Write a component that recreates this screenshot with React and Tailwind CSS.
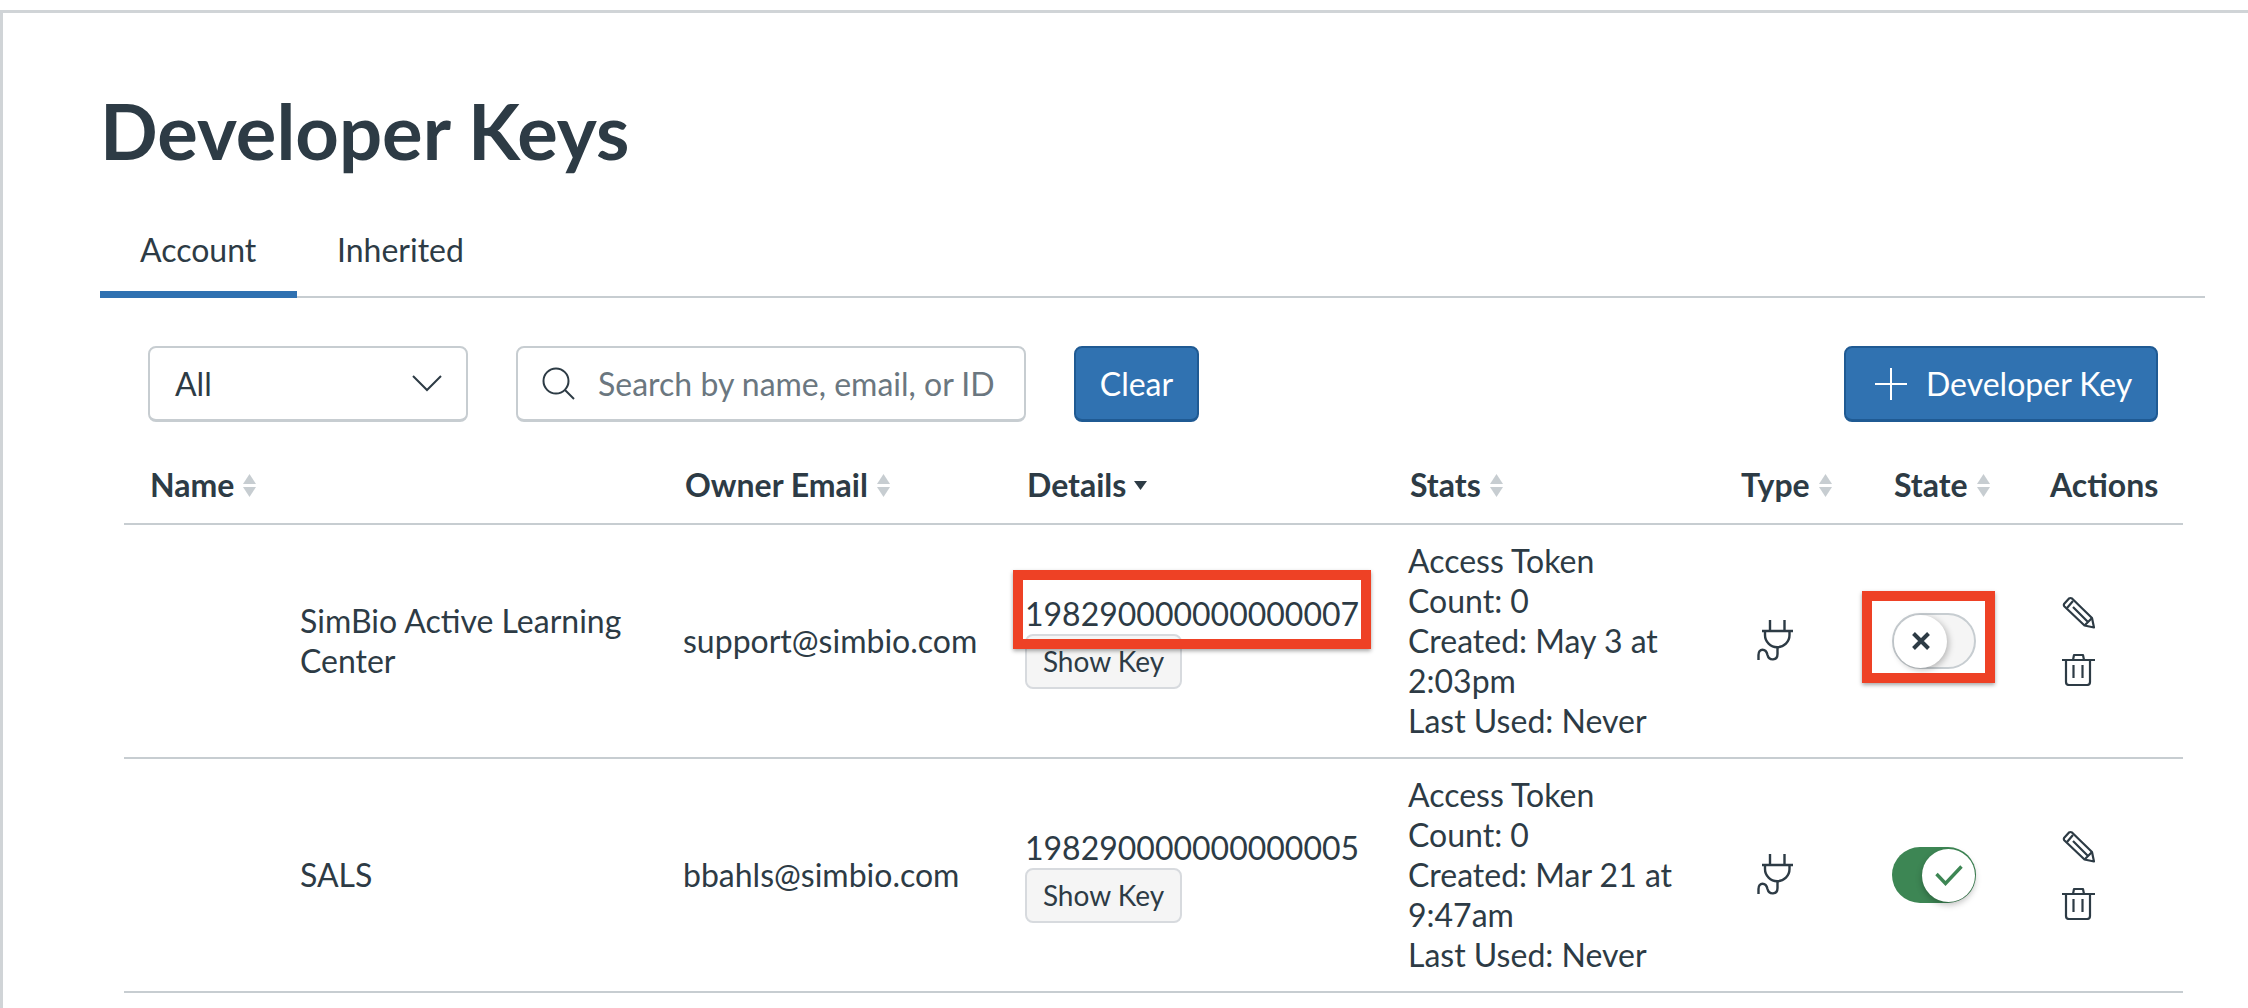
const cols = 'grid grid-cols-[533px_342px_383px_333px_151px_158px_1fr] pl-[26px] border-b-2 border-[#c7cdd1]';

function SortIcon() {
  return (
    <svg className="ml-[9px] w-[13px] h-[23px]" viewBox="0 0 13 23">
      <path d="M6.5 0 L13 10 H0 Z" fill="#c7cdd1" />
      <path d="M0 13 H13 L6.5 23 Z" fill="#c7cdd1" />
    </svg>
  );
}

function Header({ label, sort = true, down = false, first = false }) {
  return (
    <div className={`flex items-center font-bold text-[32px] leading-[40px] ${first ? '' : 'ml-[2px]'}`}>
      {label}
      {sort && <SortIcon />}
      {down && (
        <svg className="ml-[8px] w-[13px] h-[9px]" viewBox="0 0 13 9">
          <path d="M0 0 H13 L6.5 9 Z" fill="#2d3b45" />
        </svg>
      )}
    </div>
  );
}

function PlugIcon() {
  return (
    <svg className="w-[38px] h-[42px] ml-[16px]" viewBox="0 0 38 42" fill="none" stroke="#2d3b45" strokeWidth="2.4">
      <path d="M13 0 V11 M27.5 0 V11 M5 11 H36" />
      <path d="M8 11 V15 A12.2 12.2 0 0 0 32.5 15 V11" />
      <path d="M20.5 27 V34 C20.5 41 12 41 10.5 35 C9 28 1.5 28 1.5 35 V40" />
    </svg>
  );
}

function PencilIcon() {
  return (
    <svg className="w-[33px] h-[33px]" viewBox="0 0 33 33" fill="none" stroke="#2d3b45" strokeWidth="2.2" strokeLinejoin="round">
      <path d="M2 8 L7 2.5 Q8.5 1.5 10 2.5 L30 22 L32 31.5 L22.5 29.5 L2.5 10.5 Q1.5 9.5 2 8 Z" />
      <path d="M5 12 L11 5 M11 11 L26 26 M22.5 29.5 L30 22" />
    </svg>
  );
}

function TrashIcon() {
  return (
    <svg className="w-[33px] h-[33px]" viewBox="0 0 33 33" fill="none" stroke="#2d3b45" strokeWidth="2.2" strokeLinejoin="round">
      <path d="M0 7 H33 M11 7 L12 2 H21 L22 7" />
      <path d="M4 7 V29 Q4 32 7 32 H25 Q28 32 28 29 V7" />
      <path d="M11.5 12 V25 M20.5 12 V25" />
    </svg>
  );
}

function Toggle({ on }) {
  if (on) {
    return (
      <div className="relative w-[84px] h-[56px] rounded-full bg-[#3d8654] flex justify-end items-center pr-[1px]">
        <div className="w-[53px] h-[53px] rounded-full bg-white shadow-[0_3px_6px_rgba(0,0,0,0.25)] flex items-center justify-center">
          <svg className="w-[28px] h-[21px]" viewBox="0 0 28 21" fill="none" stroke="#3d8654" strokeWidth="3.4">
            <path d="M1.5 9 L10.5 18.5 L26.5 1.5" />
          </svg>
        </div>
      </div>
    );
  }
  return (
    <div className="relative w-[84px] h-[56px] rounded-full bg-[#f5f5f5] border-2 border-[#c7cdd1] flex items-center">
      <div className="w-[53px] h-[53px] rounded-full bg-white shadow-[2px_2px_6px_rgba(0,0,0,0.25)] flex items-center justify-center">
        <svg className="w-[18px] h-[18px]" viewBox="0 0 18 18" fill="none" stroke="#2d3b45" strokeWidth="4">
          <path d="M1.5 1.5 L16.5 16.5 M16.5 1.5 L1.5 16.5" />
        </svg>
      </div>
    </div>
  );
}

function Row({ name, email, id, created, on, marked }) {
  return (
    <div className={`${cols} h-[234px] items-center text-[32px] leading-[40px]`}>
      <div className="pl-[150px] w-[500px]">{name}</div>
      <div>{email}</div>
      <div className="relative">
        <div>{id}</div>
        <button className="h-[55px] w-[157px] rounded-lg border-2 border-[#d7dade] bg-[#f5f5f5] text-[28px]">Show Key</button>
        {marked && (
          <div className="absolute left-[-12px] top-[-24px] w-[358px] h-[79px] border-[10px] border-[#ee4125] shadow-[0_2px_4px_rgba(0,0,0,0.35)]" />
        )}
      </div>
      <div className="w-[290px]">
        <div>Access Token</div>
        <div>Count: 0</div>
        <div>{`Created: ${created}`}</div>
        <div>Last Used: Never</div>
      </div>
      <PlugIcon />
      <div className="relative">
        <Toggle on={on} />
        {marked && (
          <div className="absolute left-[-30px] top-[-22px] w-[133px] h-[92px] border-[10px] border-[#ee4125] shadow-[0_2px_4px_rgba(0,0,0,0.35)]" />
        )}
      </div>
      <div className="flex flex-col gap-[24px] pl-[12px]">
        <PencilIcon />
        <TrashIcon />
      </div>
    </div>
  );
}

export default function App() {
  return (
    <div className="min-h-screen bg-white pt-[10px] text-[#2d3b45] font-['Lato',sans-serif] overflow-hidden">
      <div className="border-t-[3px] border-l-[3px] border-[#d0d4d7] h-[998px] pl-[97px]">
        <h1 className="pt-[73px] text-[76px] leading-[90px] font-bold">Developer Keys</h1>

        <div className="mt-[40px] w-[2105px] flex border-b-2 border-[#c7cdd1] h-[82px] text-[32px]">
          <div className="w-[197px] pl-[40px] pt-[10px] h-[82px] border-b-[7px] border-[#2f71b1]">Account</div>
          <div className="pl-[40px] pt-[10px]">Inherited</div>
        </div>

        <div className="mt-[48px] ml-[48px] w-[2010px] flex text-[32px]">
          <div className="w-[320px] h-[76px] rounded-lg border-2 border-b-[3px] border-[#c7cdd1] flex items-center justify-between pl-[25px] pr-[24px]">
            All
            <svg className="w-[30px] h-[17px]" viewBox="0 0 30 17" fill="none" stroke="#2d3b45" strokeWidth="2">
              <path d="M1 1 L15 15 L29 1" />
            </svg>
          </div>
          <div className="ml-[48px] w-[510px] h-[76px] rounded-lg border-2 border-b-[3px] border-[#c7cdd1] flex items-center pl-[24px] text-[#6b7780]">
            <svg className="w-[33px] h-[33px] shrink-0" viewBox="0 0 33 33" fill="none" stroke="#2d3b45" strokeWidth="2">
              <circle cx="14" cy="14" r="12.5" />
              <path d="M23 23 L32 32" />
            </svg>
            <span className="ml-[23px]">Search by name, email, or ID</span>
          </div>
          <button className="ml-[48px] w-[125px] h-[76px] rounded-lg bg-[#3072b1] border-2 border-b-[3px] border-[#1f5a93] text-white">Clear</button>
          <button className="ml-auto w-[314px] h-[76px] rounded-lg bg-[#3072b1] border-2 border-b-[3px] border-[#1f5a93] text-white flex items-center pl-[29px]">
            <svg className="w-[32px] h-[32px]" viewBox="0 0 32 32" stroke="#ffffff" strokeWidth="2">
              <path d="M16 0 V32 M0 16 H32" />
            </svg>
            <span className="ml-[19px]">Developer Key</span>
          </button>
        </div>

        <div className="ml-[24px] w-[2059px]">
          <div className={`${cols} h-[103px] items-center pt-[25px]`}>
            <Header label="Name" first />
            <Header label="Owner Email" />
            <Header label="Details" sort={false} down />
            <Header label="Stats" />
            <Header label="Type" first />
            <Header label="State" />
            <Header label="Actions" sort={false} first />
          </div>
          <Row
            name="SimBio Active Learning Center"
            email="support@simbio.com"
            id="198290000000000007"
            created="May 3 at 2:03pm"
            marked
          />
          <Row
            name="SALS"
            email="bbahls@simbio.com"
            id="198290000000000005"
            created="Mar 21 at 9:47am"
            on
          />
        </div>
      </div>
    </div>
  );
}
